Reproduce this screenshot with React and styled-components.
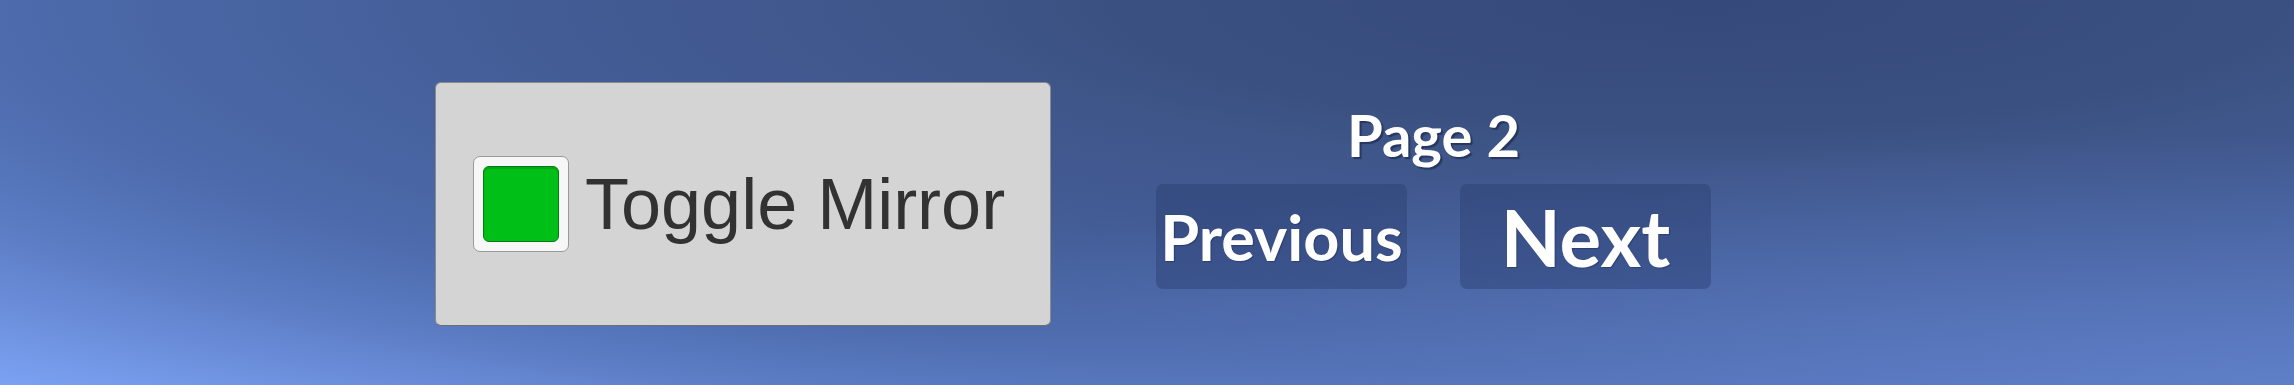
import React from 'react';
import styled, { createGlobalStyle } from 'styled-components';

const GlobalStyle = createGlobalStyle`
  html, body {
    margin: 0;
    padding: 0;
  }
  body {
    width: 2294px;
    height: 385px;
    overflow: hidden;
  }
`;

const Screen = styled.div`
  width: 2294px;
  height: 385px;
  box-sizing: border-box;
  display: flex;
  align-items: flex-start;
  gap: 105px;
  padding: 82px 0 0 435px;
  background:
    radial-gradient(ellipse 1500px 250px at 2294px 385px, rgba(98, 130, 204, 0.75) 0%, rgba(98, 130, 204, 0) 100%),
    radial-gradient(
      ellipse 2400px 520px at 1700px 0px,
      #354a7a 0%,
      #3a5080 24%,
      #3e5689 32%,
      #425b94 47%,
      #4a67a6 66%,
      #4e6cae 72%,
      #5a7bc2 82%,
      #6a8cd8 91%,
      #7aa2f2 102%
    );
`;

const Panel = styled.div`
  width: 616px;
  height: 244px;
  box-sizing: border-box;
  display: flex;
  align-items: center;
  gap: 16px;
  padding-left: 37px;
  background: #d4d4d4;
  border: 1px solid #8a8a8a;
  border-bottom-color: #6e6e6e;
  border-radius: 6px;
`;

const CheckBox = styled.div`
  width: 96px;
  height: 96px;
  box-sizing: border-box;
  display: flex;
  align-items: center;
  justify-content: center;
  background: #f7f7f7;
  border: 1px solid #9a9a9a;
  border-radius: 7px;
`;

const CheckFill = styled.div`
  width: 76px;
  height: 76px;
  box-sizing: border-box;
  background: ${(p) => (p.$on ? '#00bf16' : 'transparent')};
  border: 1px solid ${(p) => (p.$on ? '#087a12' : 'transparent')};
  border-radius: 6px;
  box-shadow: inset 0 2px 1px rgba(0, 0, 0, 0.12);
`;

const Label = styled.span`
  font-family: 'Liberation Sans', Arial, sans-serif;
  font-size: 72px;
  color: #323232;
  white-space: nowrap;
`;

const Pager = styled.div`
  display: flex;
  flex-direction: column;
  align-items: center;
  padding-top: 24px;
  gap: 20px;
`;

const PageTitle = styled.div`
  font-family: Lato, 'Open Sans', sans-serif;
  font-weight: 700;
  font-size: 58px;
  line-height: 1;
  color: #ffffff;
  text-shadow: 2px 2px 1px rgba(20, 30, 60, 0.55);
`;

const ButtonRow = styled.div`
  display: flex;
  gap: 53px;
`;

const NavButton = styled.button`
  width: 251px;
  height: 105px;
  padding: 0;
  border: none;
  border-radius: 7px;
  display: flex;
  align-items: center;
  justify-content: center;
  background: rgba(42, 62, 112, 0.45);
  font-family: Lato, 'Open Sans', sans-serif;
  font-weight: 700;
  font-size: ${(p) => p.$size}px;
  line-height: 1;
  color: #ffffff;
  white-space: nowrap;
  overflow: visible;
  text-shadow: 1px 1px 1px rgba(20, 30, 60, 0.35);
  cursor: pointer;
`;

export default function App() {
  return (
    <>
      <GlobalStyle />
      <Screen>
        <Panel>
          <CheckBox>
            <CheckFill $on />
          </CheckBox>
          <Label>Toggle Mirror</Label>
        </Panel>
        <Pager>
          <PageTitle>Page 2</PageTitle>
          <ButtonRow>
            <NavButton $size={63}>Previous</NavButton>
            <NavButton $size={78}>Next</NavButton>
          </ButtonRow>
        </Pager>
      </Screen>
    </>
  );
}
